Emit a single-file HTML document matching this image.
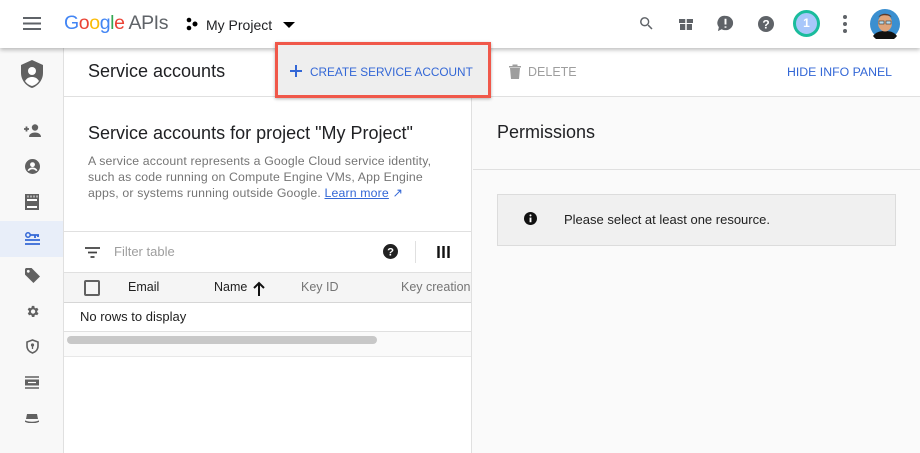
<!DOCTYPE html><html><head><style>
*{box-sizing:border-box;margin:0;padding:0}
body{width:920px;height:453px;overflow:hidden;font-family:"Liberation Sans",Arial,sans-serif;background:#fafafa;position:relative;color:#202124}
.a{position:absolute}
svg{display:block}
</style></head><body>
<!-- sidebar -->
<div class="a" style="left:0;top:48px;width:64px;height:405px;background:#f8f8f8;border-right:1px solid #e0e0e0"></div>
<div class="a" style="left:0;top:221px;width:63px;height:36px;background:#e8eef9"></div>
<!-- main panel -->
<div class="a" style="left:64px;top:48px;width:408px;height:405px;background:#fff;border-right:1px solid #e0e0e0"></div>
<!-- header row -->
<div class="a" style="left:64px;top:48px;width:856px;height:49px;background:#fff;border-bottom:1px solid #e0e0e0"></div>
<div class="a" style="left:88px;top:61px;font-size:18px;color:#202124">Service accounts</div>
<svg class="a" style="left:508px;top:64px" width="14" height="15" viewBox="0 0 14 15"><path d="M1 2h12v1.5H1zM4.5 0.5h5V2h-5zM2 4h10l-1 11H3z" fill="#9e9e9e"/></svg>
<div class="a" style="left:528px;top:65px;font-size:12.5px;color:#9e9e9e">DELETE</div>
<div class="a" style="left:787px;top:65px;font-size:12.3px;color:#3367d6">HIDE INFO PANEL</div>
<!-- top bar -->
<div class="a" style="left:0;top:0;width:920px;height:48px;background:#fff;box-shadow:0 2px 4px rgba(0,0,0,.25)"></div>
<div class="a" style="left:275px;top:42px;width:216px;height:56px;border:3px solid #f0584a;background:#eeeeee;box-shadow:0 1px 3px rgba(0,0,0,.3)"></div>
<svg class="a" style="left:290px;top:65px" width="12" height="12"><path d="M6 0v12M0 6h12" stroke="#3367d6" stroke-width="2"/></svg>
<div class="a" style="left:310px;top:65px;font-size:11.8px;color:#3367d6">CREATE SERVICE ACCOUNT</div>
<svg class="a" style="left:23px;top:17px" width="18" height="13"><path d="M0 1h18M0 6.5h18M0 12h18" stroke="#5f6368" stroke-width="2"/></svg>
<div class="a" style="left:64px;top:12px;font-size:19.5px;letter-spacing:-.4px"><span style="color:#4285f4">G</span><span style="color:#ea4335">o</span><span style="color:#fbbc05">o</span><span style="color:#4285f4">g</span><span style="color:#34a853">l</span><span style="color:#ea4335">e</span><span style="color:#5f6368"> APIs</span></div>
<svg class="a" style="left:185px;top:17px" width="14" height="14"><circle cx="4" cy="3" r="2.3"/><circle cx="10" cy="7" r="2.5"/><circle cx="4" cy="11" r="2.3"/></svg>
<div class="a" style="left:206px;top:17px;font-size:14px">My Project</div>
<svg class="a" style="left:282px;top:21px" width="14" height="8"><path d="M1 1h12L7 7z"/></svg>
<svg class="a" style="left:638px;top:15px" width="17" height="17" viewBox="0 0 24 24"><path fill="#5f6368" d="M15.5 14h-.8l-.3-.3A6.5 6.5 0 1 0 9.5 16a6.5 6.5 0 0 0 4.2-1.6l.3.3v.8l5 5 1.5-1.5-5-5zm-6 0A4.5 4.5 0 1 1 14 9.5 4.5 4.5 0 0 1 9.5 14z"/></svg>
<svg class="a" style="left:678px;top:15px" width="16" height="16" viewBox="0 0 16 16"><path fill="#5f6368" d="M1 4h14v4H1zM2 9h12v6H2z"/><path d="M8 4v11" stroke="#fff" stroke-width="1.5"/></svg>
<svg class="a" style="left:716px;top:14px" width="19" height="19" viewBox="0 0 20 20"><path fill="#5f6368" d="M10 2a8 7.5 0 0 1 0 15c-1.5 0-3-.4-4-1L2 18l1-4A7.5 7.5 0 0 1 10 2z"/><path d="M10 5v6M10 13v1.5" stroke="#fff" stroke-width="2"/></svg>
<svg class="a" style="left:758px;top:16px" width="16" height="16" viewBox="0 0 16 16"><circle cx="8" cy="8" r="8" fill="#5f6368"/><text x="8" y="12.5" font-size="12" font-weight="bold" fill="#fff" text-anchor="middle" font-family="Liberation Sans">?</text></svg>
<div class="a" style="left:793px;top:10px;width:27px;height:27px;border-radius:50%;border:3px solid #1abc9c;background:#a8c7fa;color:#fff;font-size:12px;font-weight:bold;text-align:center;line-height:21px">1</div>
<svg class="a" style="left:843px;top:15px" width="4" height="18"><circle cx="2" cy="2" r="2" fill="#5f6368"/><circle cx="2" cy="9" r="2" fill="#5f6368"/><circle cx="2" cy="16" r="2" fill="#5f6368"/></svg>
<svg class="a" style="left:870px;top:9px" width="30" height="30" viewBox="0 0 30 30"><circle cx="15" cy="15" r="15" fill="#3b8fd0"/><path d="M3 27c3-4 7-5 12-5s9 1 12 5a15 15 0 0 1-24 0z" fill="#111"/><ellipse cx="15" cy="14" rx="7" ry="8.5" fill="#e0a47a"/><path d="M8 10c0-5 14-5 14 0l-1-3c-3-3-9-3-12 0z" fill="#5a3a2a"/><rect x="9" y="12" width="5" height="3" fill="#bde" stroke="#333" stroke-width=".6"/><rect x="16" y="12" width="5" height="3" fill="#bde" stroke="#333" stroke-width=".6"/></svg>
<!-- sidebar icons -->
<svg class="a" style="left:20px;top:60px" width="24" height="28" viewBox="0 0 24 28"><path d="M12 0L1 5v8c0 7 5 13 11 15 6-2 11-8 11-15V5z" fill="#616161"/><circle cx="12" cy="11" r="4" fill="#fff"/><path d="M5 21c2-3 4-4 7-4s5 1 7 4c-2 3-4 4-7 5-3-1-5-2-7-5z" fill="#fff"/></svg>
<svg class="a" style="left:24px;top:124px" width="17" height="13" viewBox="0 0 17 13"><path d="M0 5h5M2.5 2.5v5" stroke="#616161" stroke-width="1.8"/><circle cx="11" cy="3.5" r="3.2" fill="#616161"/><path d="M5 13c0-3 3-4.5 6-4.5s6 1.5 6 4.5z" fill="#616161"/></svg>
<svg class="a" style="left:25px;top:159px" width="15" height="15" viewBox="0 0 16 16"><circle cx="8" cy="8" r="8" fill="#616161"/><circle cx="8" cy="6" r="2.6" fill="#fff"/><path d="M3.5 12.5c1-2 3-2.5 4.5-2.5s3.5.5 4.5 2.5" stroke="#fff" stroke-width="1.8" fill="none"/></svg>
<svg class="a" style="left:25px;top:194px" width="14" height="16" viewBox="0 0 14 16"><rect x="0" y="0" width="14" height="16" fill="#616161"/><rect x="2" y="5" width="10" height="9" fill="#fff"/><rect x="2" y="7" width="10" height="5" fill="#616161"/><path d="M3 1.5v2M6 1.5v2M9 1.5v2M12 1.5v2" stroke="#fff"/></svg>
<svg class="a" style="left:25px;top:232px" width="15" height="13" viewBox="0 0 15 13"><circle cx="3" cy="3" r="2.2" fill="none" stroke="#3367d6" stroke-width="1.5"/><path d="M5 3h9M10 3v3M13 3v2M0 8h15M0 12h15" stroke="#3367d6" stroke-width="1.8"/></svg>
<svg class="a" style="left:25px;top:268px" width="15" height="15" viewBox="0 0 16 16"><path d="M0 1v6l9 9 7-7-9-9H1z" fill="#616161"/><circle cx="3.5" cy="3.5" r="1.5" fill="#f8f8f8"/></svg>
<svg class="a" style="left:25px;top:304px" width="15" height="15" viewBox="0 0 24 24"><path fill="#616161" d="M19.4 13a7 7 0 0 0 0-2l2.1-1.6-2-3.5-2.5 1a7 7 0 0 0-1.7-1L14.9 3h-4l-.4 2.7a7 7 0 0 0-1.7 1l-2.5-1-2 3.5L6.5 11a7 7 0 0 0 0 2l-2.1 1.6 2 3.5 2.5-1a7 7 0 0 0 1.7 1l.4 2.6h4l.4-2.7a7 7 0 0 0 1.7-1l2.5 1 2-3.5zM12.9 15.5A3.5 3.5 0 1 1 16.4 12a3.5 3.5 0 0 1-3.5 3.5z"/></svg>
<svg class="a" style="left:26px;top:339px" width="13" height="15" viewBox="0 0 13 15"><path d="M6.5 1L1 3v4c0 3.5 2.5 6 5.5 7 3-1 5.5-3.5 5.5-7V3z" fill="none" stroke="#616161" stroke-width="1.6"/><circle cx="6.5" cy="6" r="1.6" fill="#616161"/><path d="M6.5 7v3" stroke="#616161" stroke-width="1.3"/></svg>
<svg class="a" style="left:25px;top:376px" width="14" height="13" viewBox="0 0 14 13"><path d="M0 1h14M0 12h14" stroke="#616161" stroke-width="1.5"/><rect x="0" y="3.5" width="14" height="6" fill="#616161"/><path d="M3 6.5h8" stroke="#fff" stroke-width="1.2"/></svg>
<svg class="a" style="left:25px;top:413px" width="14" height="10" viewBox="0 0 14 10"><path d="M2 1h10l1 5H1z" fill="#616161"/><path d="M0 8c3 2 11 2 14 0" stroke="#616161" stroke-width="1.5" fill="none"/></svg>
<!-- left content -->
<div class="a" style="left:88px;top:123px;font-size:18px;color:#202124">Service accounts for project "My Project"</div>
<div class="a" style="left:88px;top:153px;width:358px;font-size:12.3px;line-height:16px;color:#757575;letter-spacing:.15px">A service account represents a Google Cloud service identity, such as code running on Compute Engine VMs, App Engine apps, or systems running outside Google. <span style="color:#3367d6;text-decoration:underline">Learn more</span> <span style="color:#3367d6">↗</span></div>
<div class="a" style="left:64px;top:231px;width:408px;height:1px;background:#e0e0e0"></div>
<svg class="a" style="left:85px;top:247px" width="15" height="11"><path d="M0 1h15M3 5.5h9M5.5 10h4" stroke="#424242" stroke-width="1.8"/></svg>
<div class="a" style="left:114px;top:244px;font-size:13px;color:#9e9e9e">Filter table</div>
<svg class="a" style="left:383px;top:244px" width="15" height="15" viewBox="0 0 16 16"><circle cx="8" cy="8" r="8" fill="#212121"/><text x="8" y="12.5" font-size="12" font-weight="bold" fill="#fff" text-anchor="middle" font-family="Liberation Sans">?</text></svg>
<div class="a" style="left:415px;top:241px;width:1px;height:22px;background:#e0e0e0"></div>
<svg class="a" style="left:437px;top:246px" width="13" height="12"><path d="M1.5 0v12M6.5 0v12M11.5 0v12" stroke="#111" stroke-width="2.4"/></svg>
<div class="a" style="left:64px;top:272px;width:407px;height:31px;background:#f5f5f5;border-top:1px solid #e0e0e0;border-bottom:1px solid #d6d6d6"></div>
<div class="a" style="left:84px;top:280px;width:16px;height:16px;border:2px solid #616161;border-radius:2px"></div>
<div class="a" style="left:128px;top:280px;font-size:12.5px;color:#212121">Email</div>
<div class="a" style="left:214px;top:280px;font-size:12.5px;color:#212121">Name</div>
<svg class="a" style="left:253px;top:281px" width="12" height="15"><path d="M6 15V2M1 7l5-5 5 5" stroke="#111" stroke-width="2" fill="none"/></svg>
<div class="a" style="left:301px;top:280px;font-size:12.5px;color:#757575">Key ID</div>
<div class="a" style="left:401px;top:280px;font-size:12.5px;color:#757575;white-space:nowrap;width:70px;overflow:hidden">Key creation</div>
<div class="a" style="left:80px;top:309px;font-size:13px;color:#212121">No rows to display</div>
<div class="a" style="left:64px;top:331px;width:407px;height:26px;background:#fafafa;border-top:1px solid #e0e0e0;border-bottom:1px solid #e8e8e8"></div>
<div class="a" style="left:67px;top:336px;width:310px;height:8px;border-radius:4px;background:#c8c8c8"></div>
<!-- right panel -->
<div class="a" style="left:497px;top:122px;font-size:18px;color:#202124">Permissions</div>
<div class="a" style="left:473px;top:169px;width:447px;height:1px;background:#e0e0e0"></div>
<div class="a" style="left:497px;top:194px;width:399px;height:52px;background:#f0f0f0;border:1px solid #dcdcdc"></div>
<svg class="a" style="left:524px;top:212px" width="13" height="13" viewBox="0 0 14 14"><circle cx="7" cy="7" r="7" fill="#111"/><path d="M7 6v5" stroke="#fff" stroke-width="2"/><circle cx="7" cy="3.7" r="1.1" fill="#fff"/></svg>
<div class="a" style="left:564px;top:212px;font-size:13px;color:#212121">Please select at least one resource.</div>
</body></html>
